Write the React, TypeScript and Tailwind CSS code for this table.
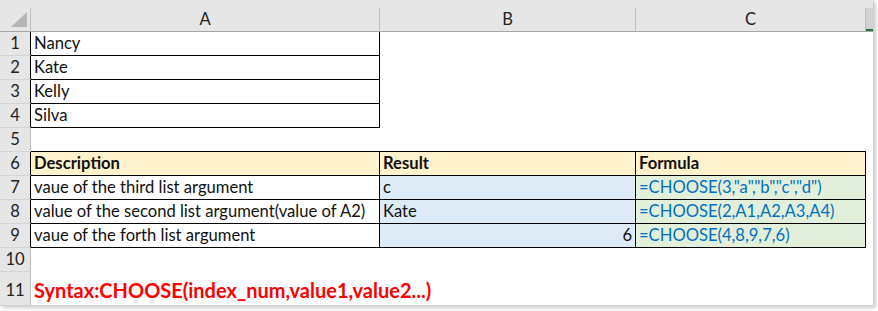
import React from 'react';

type Cell = {
  text?: string;
  bg?: string;
  color?: string;
  bold?: boolean;
  right?: boolean;
  border?: boolean; // black right edge
  bottom?: boolean; // black bottom edge
};

type Row = { n: number; h: string; cells: Cell[]; big?: boolean };

const cols = 'grid-cols-[31px_349px_256px_230px_8px]';

const boxed = (text: string, extra: Partial<Cell> = {}): Cell => ({ text, border: true, bottom: true, ...extra });

const rows: Row[] = [
  { n: 1, h: 'h-6', cells: [boxed('Nancy'), {}, {}] },
  { n: 2, h: 'h-6', cells: [boxed('Kate'), {}, {}] },
  { n: 3, h: 'h-6', cells: [boxed('Kelly'), {}, {}] },
  { n: 4, h: 'h-6', cells: [boxed('Silva'), {}, {}] },
  { n: 5, h: 'h-6', cells: [{ bottom: true }, { bottom: true }, { bottom: true }] },
  {
    n: 6,
    h: 'h-6',
    cells: [
      boxed('Description', { bg: 'bg-[#fff2cc]', bold: true }),
      boxed('Result', { bg: 'bg-[#fff2cc]', bold: true }),
      boxed('Formula', { bg: 'bg-[#fff2cc]', bold: true }),
    ],
  },
  {
    n: 7,
    h: 'h-6',
    cells: [
      boxed('vaue of the third list argument'),
      boxed('c', { bg: 'bg-[#ddebf7]' }),
      boxed('=CHOOSE(3,"a","b","c","d")', { bg: 'bg-[#e2efda]', color: 'text-[#0070c0]' }),
    ],
  },
  {
    n: 8,
    h: 'h-6',
    cells: [
      boxed('value of the second list argument(value of A2)'),
      boxed('Kate', { bg: 'bg-[#ddebf7]' }),
      boxed('=CHOOSE(2,A1,A2,A3,A4)', { bg: 'bg-[#e2efda]', color: 'text-[#0070c0]' }),
    ],
  },
  {
    n: 9,
    h: 'h-6',
    cells: [
      boxed('vaue of the forth list argument'),
      boxed('6', { bg: 'bg-[#ddebf7]', right: true }),
      boxed('=CHOOSE(4,8,9,7,6)', { bg: 'bg-[#e2efda]', color: 'text-[#0070c0]' }),
    ],
  },
  { n: 10, h: 'h-6', cells: [{}, {}, {}] },
  { n: 11, h: 'h-[34px]', big: true, cells: [{}, {}, {}] },
];

const bordered = new Set([1, 2, 3, 4, 6, 7, 8, 9]);

function ColHeader({ label }: { label: string }) {
  return (
    <div className="flex items-end pt-2">
      <div className="flex h-[23px] w-full items-center justify-center border-r border-[#bcbcbc]">{label}</div>
    </div>
  );
}

export default function App() {
  return (
    <div className="h-[311px] w-[878px] bg-white font-['Lato','Liberation_Sans',sans-serif] text-[16.6px] leading-none text-[#111]">
      <div className="h-[306px] w-[874px] overflow-hidden border-r border-b border-[#cfcfcf] bg-white shadow-[2px_2px_4px_rgba(0,0,0,0.2)]">
        {/* column header strip */}
        <div className={`grid ${cols} h-8 border-b border-[#a6a6a6] bg-[#e6e6e6] text-[#222]`}>
          <div className="flex items-end pt-2">
            <div className="h-[23px] w-full border-r border-[#bcbcbc]">
              <svg width="30" height="23" viewBox="0 0 30 23">
                <polygon points="27,4 27,19 11,19" fill="#b5b5b5" />
              </svg>
            </div>
          </div>
          <ColHeader label="A" />
          <ColHeader label="B" />
          <ColHeader label="C" />
          <div className="mt-2 h-[23px] border-b-2 border-[#217346] bg-[#d2d2d2]" />
        </div>

        {rows.map((row) => (
          <div key={row.n} className={`grid ${cols} ${row.h}`}>
            <div
              className={`flex items-end justify-center border-r border-b border-b-[#d4d4d4] bg-[#e6e6e6] text-[#222] ${
                row.big ? 'pb-[6px]' : 'pb-[3px]'
              } ${bordered.has(row.n) ? 'border-r-black' : 'border-r-[#bcbcbc]'}`}
            >
              {row.n}
            </div>
            {row.big ? (
              <div className="col-span-4 flex items-end pb-[6px] pl-[3px] text-[20px] font-bold whitespace-nowrap text-[#ff0000]">
                Syntax:CHOOSE(index_num,value1,value2...)
              </div>
            ) : (
              <>
                {row.cells.map((c, i) => (
                  <div
                    key={i}
                    className={`flex items-end overflow-hidden whitespace-nowrap px-[3px] pb-[3px] ${c.bg ?? ''} ${
                      c.color ?? ''
                    } ${c.bold ? 'font-bold' : ''} ${c.right ? 'justify-end' : ''} ${
                      c.border ? 'border-r border-black' : ''
                    } ${c.bottom ? 'border-b border-black' : ''}`}
                  >
                    {c.text}
                  </div>
                ))}
                <div />
              </>
            )}
          </div>
        ))}
      </div>
    </div>
  );
}
